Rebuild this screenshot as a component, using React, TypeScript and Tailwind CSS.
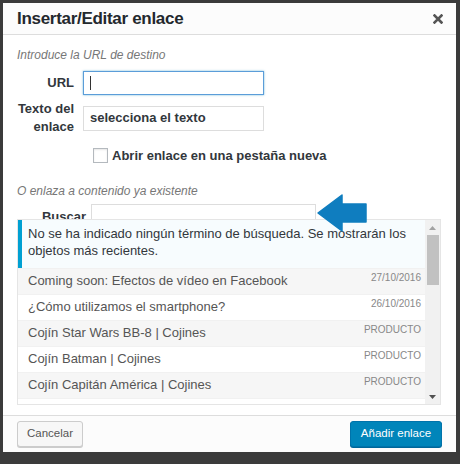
import React from "react";

const rows = [
  { title: "Coming soon: Efectos de vídeo en Facebook", info: "27/10/2016", alt: true },
  { title: "¿Cómo utilizamos el smartphone?", info: "26/10/2016", alt: false },
  { title: "Cojín Star Wars BB-8 | Cojines", info: "PRODUCTO", alt: true },
  { title: "Cojín Batman | Cojines", info: "PRODUCTO", alt: false },
  { title: "Cojín Capitán América | Cojines", info: "PRODUCTO", alt: true },
  { title: "", info: "", alt: false },
];

function App() {
  return (
    <div className="relative w-[460px] h-[464px] overflow-hidden bg-[#3b3b3b] pl-[3px] pt-[3px] font-['Liberation_Sans',Arial,sans-serif]">
      <div className="flex w-[453px] h-[449px] flex-col bg-white">
        {/* header */}
        <div className="flex h-[32px] flex-none items-center justify-between border-b border-[#dddddd] bg-[#fcfcfc] pl-[14px] pr-[13px]">
          <span className="text-[17px] font-bold leading-[22px] tracking-[-0.3px] text-[#23282d]">
            Insertar/Editar enlace
          </span>
          <svg width="10" height="10" viewBox="0 0 10 10" className="mt-[1px]">
            <path d="M1.5 1.5 L8.5 8.5 M8.5 1.5 L1.5 8.5" stroke="#555" strokeWidth="2.6" strokeLinecap="square" />
          </svg>
        </div>

        {/* body */}
        <div className="flex flex-1 flex-col px-[14px] pt-[12px]">
          <span className="text-[12px] italic leading-[16px] text-[#777]">
            Introduce la URL de destino
          </span>
          <div className="mt-[8px] flex items-center gap-[9px]">
            <span className="w-[57px] text-right text-[13px] font-bold text-[#32373c]">URL</span>
            <div className="flex h-[24px] w-[181px] items-center border border-[#5b9dd9] px-[6px] shadow-[0_0_2px_rgba(30,140,190,0.6)]">
              <span className="h-[14px] w-px bg-[#333]" />
            </div>
          </div>
          <div className="mt-[5px] flex items-center gap-[9px]">
            <span className="w-[57px] text-right text-[13px] font-bold leading-[18px] text-[#32373c]">
              Texto del
              <br />
              enlace
            </span>
            <div className="flex h-[25px] w-[181px] items-center border border-[#dddddd] px-[6px] text-[13px] font-bold text-[#32373c]">
              selecciona el texto
            </div>
          </div>
          <div className="mt-[12px] ml-[76px] flex items-center gap-[4px]">
            <span className="h-[15px] w-[15px] border border-[#b4b9be] bg-white shadow-[inset_0_1px_2px_rgba(0,0,0,0.1)]" />
            <span className="text-[13px] font-bold leading-[15px] text-[#32373c]">
              Abrir enlace en una pestaña nueva
            </span>
          </div>
          <span className="mt-[20px] text-[12px] italic leading-[16px] text-[#777]">
            O enlaza a contenido ya existente
          </span>
          <div className="mt-[5px] flex items-center gap-[5px]">
            <span className="w-[69px] pt-[2px] text-right text-[13px] font-bold text-[#32373c]">Buscar</span>
            <div className="h-[24px] w-[225px] border border-[#dddddd]" />
          </div>

          {/* results */}
          <div className="relative z-10 -mt-[9px] flex h-[186px] w-[424px] border border-[#e5e5e5] bg-white">
            <div className="flex flex-1 flex-col overflow-hidden">
              <div className="flex-none border-l-[4px] border-[#00a0d2] bg-[#f7fcfe] pt-[5px] pb-[9px] pl-[6px] pr-[4px] text-[13px] leading-[17px] text-[#32373c]">
                No se ha indicado ningún término de búsqueda. Se mostrarán los objetos más recientes.
              </div>
              {rows.map((r, i) => (
                <div
                  key={i}
                  className={`flex h-[26px] flex-none justify-between border-t border-[#f1f1f1] pl-[10px] pr-[4px] ${r.alt ? "bg-[#f6f6f6]" : "bg-white"}`}
                >
                  <span className="pt-[3px] text-[13px] leading-[17px] text-[#555]">{r.title}</span>
                  <span className="pt-[2px] text-[10px] leading-[14px] text-[#888]">{r.info}</span>
                </div>
              ))}
            </div>
            {/* scrollbar */}
            <div className="flex w-[15px] flex-none flex-col items-center bg-[#f1f1f1]">
              <div className="flex h-[15px] items-center justify-center">
                <svg width="7" height="4" viewBox="0 0 7 4">
                  <path d="M0 4 L3.5 0 L7 4 Z" fill="#a3a3a3" />
                </svg>
              </div>
              <div className="h-[50px] w-[12px] bg-[#c1c1c1]" />
              <div className="flex-1" />
              <div className="flex h-[15px] items-center justify-center">
                <svg width="7" height="4" viewBox="0 0 7 4">
                  <path d="M0 0 L7 0 L3.5 4 Z" fill="#505050" />
                </svg>
              </div>
            </div>
          </div>
        </div>

        {/* footer */}
        <div className="flex h-[37px] flex-none items-center justify-between border-t border-[#dddddd] bg-[#fcfcfc] px-[14px]">
          <button className="h-[26px] w-[66px] rounded-[3px] border border-[#cccccc] bg-[#f7f7f7] text-[11.5px] text-[#555] shadow-[0_1px_0_#cccccc]">
            Cancelar
          </button>
          <button className="h-[26px] w-[92px] rounded-[3px] border border-[#0073aa] bg-[#0085ba] text-[11.5px] text-white shadow-[0_1px_0_#006799]">
            Añadir enlace
          </button>
        </div>
      </div>

      {/* annotation arrow */}
      <svg className="absolute left-[314px] top-[192px] z-20" width="56" height="42" viewBox="314 192 56 42">
        <path
          d="M318 213 L342 195 L342 204 L366 204 L366 222 L342 222 L342 231 Z"
          fill="#0f7dbf"
          stroke="#0f7dbf"
          strokeWidth="1.5"
          strokeLinejoin="round"
        />
      </svg>
    </div>
  );
}

export default App;
